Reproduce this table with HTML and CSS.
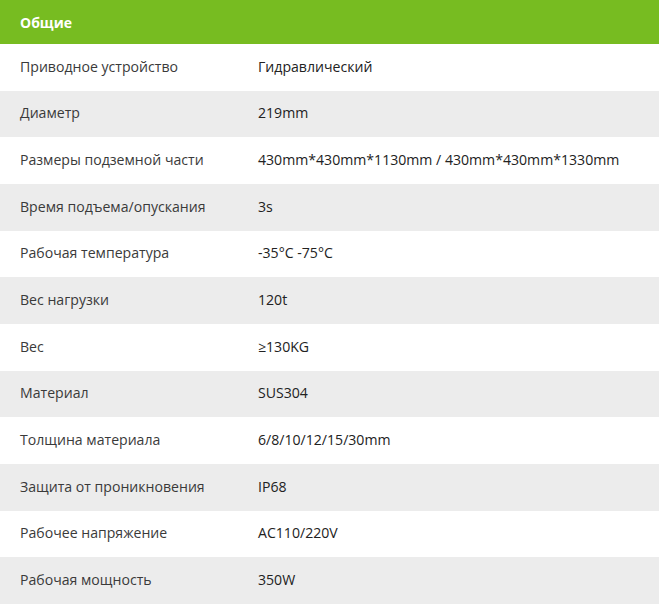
FILE: index.html
```html
<!DOCTYPE html>
<html lang="ru">
<head>
<meta charset="utf-8">
<link rel="stylesheet" href="styles.css">
</head>
<body>
<table class="spec">
  <colgroup><col class="col-k"><col class="col-v"></colgroup>
  <thead>
    <tr><th colspan="2">Общие</th></tr>
  </thead>
  <tbody>
    <tr><td class="k">Приводное устройство</td><td class="v">Гидравлический</td></tr>
    <tr><td class="k">Диаметр</td><td class="v">219mm</td></tr>
    <tr><td class="k">Размеры подземной части</td><td class="v">430mm*430mm*1130mm / 430mm*430mm*1330mm</td></tr>
    <tr><td class="k">Время подъема/опускания</td><td class="v">3s</td></tr>
    <tr><td class="k">Рабочая температура</td><td class="v">-35°C -75°C</td></tr>
    <tr><td class="k">Вес нагрузки</td><td class="v">120t</td></tr>
    <tr><td class="k">Вес</td><td class="v">≥130KG</td></tr>
    <tr><td class="k">Материал</td><td class="v">SUS304</td></tr>
    <tr><td class="k">Толщина материала</td><td class="v">6/8/10/12/15/30mm</td></tr>
    <tr><td class="k">Защита от проникновения</td><td class="v">IP68</td></tr>
    <tr><td class="k">Рабочее напряжение</td><td class="v">AC110/220V</td></tr>
    <tr><td class="k">Рабочая мощность</td><td class="v">350W</td></tr>
  </tbody>
</table>
</body>
</html>
```
FILE: styles.css
```css
html, body {
  margin: 0;
  padding: 0;
  background: #ffffff;
}
body {
  font-family: "Open Sans", "Noto Sans", sans-serif;
  color: #333333;
}
.spec {
  width: 659px;
  border-collapse: collapse;
  table-layout: fixed;
}
.col-k {
  width: 258px;
}
.spec th {
  background: #77bc21;
  color: #ffffff;
  font-weight: 700;
  font-size: 14px;
  text-align: left;
  height: 44px;
  padding: 0 0 0 20px;
  box-sizing: border-box;
}
.spec td {
  height: 46.67px;
  padding: 0 0 2px 0;
  font-size: 14.1px;
  vertical-align: middle;
  box-sizing: border-box;
  white-space: nowrap;
}
.spec .k {
  padding-left: 20px;
  color: #3a3a3a;
}
.spec .v {
  color: #222222;
}
.spec tbody tr:nth-child(even) td {
  background: #ececec;
}
```
